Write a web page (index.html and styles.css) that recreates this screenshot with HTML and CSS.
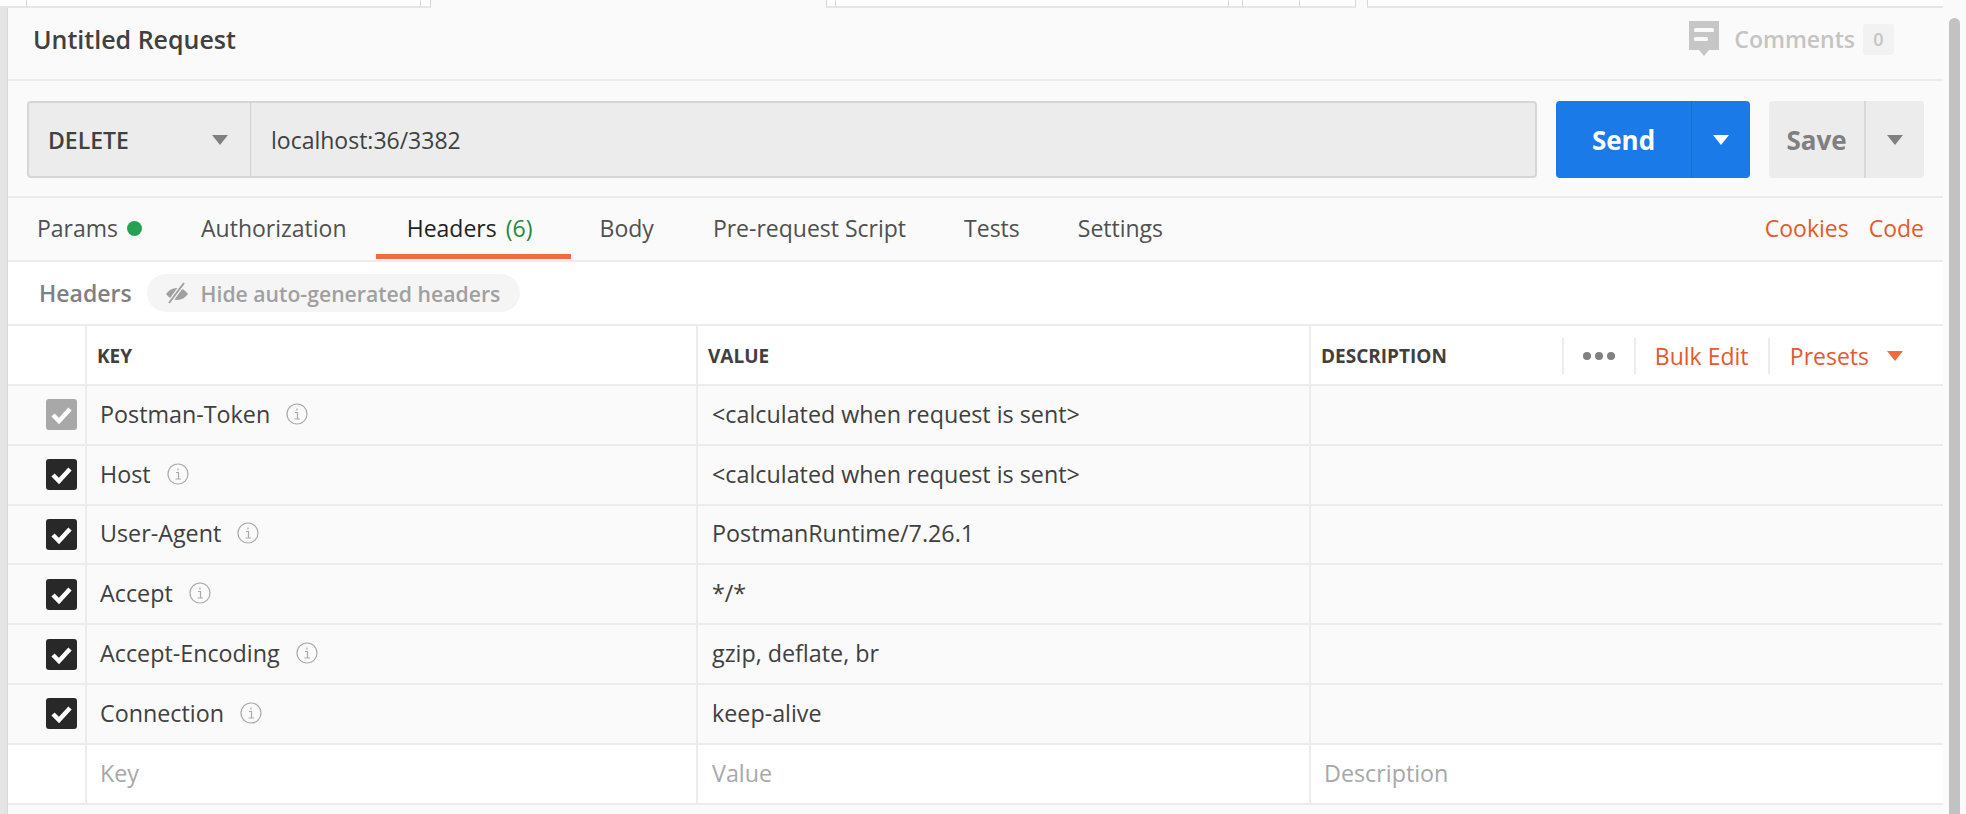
FILE: index.html
```html
<!DOCTYPE html>
<html lang="en">
<head>
  <meta charset="UTF-8">
  <title>Untitled Request</title>
  <link rel="stylesheet" href="styles.css">
</head>
<body>
  <div class="app">
    <div class="side"></div>

    <div class="main">
      <!-- tab strip cut off at the top -->
      <div class="strip">
        <div class="strip-tab t0"></div>
        <div class="strip-tab t1"></div>
        <div class="strip-tab t2"></div>
        <div class="strip-gap"></div>
        <div class="strip-tab t2b"></div>
        <div class="strip-tab t3"></div>
        <div class="strip-tab t4"></div>
        <div class="strip-tab t5"></div>
        <div class="strip-tab t6"></div>
        <div class="strip-tab t7"></div>
      </div>

      <div class="title-bar">
        <div class="title">Untitled Request</div>
        <div class="comments">
          <svg class="comment-icon" width="32" height="38" viewBox="0 0 32 38">
            <path d="M1 1h30v29H21l-5 6-5-6H1z" fill="#c6c6c6"/>
            <rect x="6" y="8" width="20" height="4" rx="1.5" fill="#fafafa"/>
            <rect x="6" y="17" width="14" height="4" rx="1.5" fill="#fafafa"/>
          </svg>
          <span class="comments-label">Comments</span>
          <span class="comments-count">0</span>
        </div>
      </div>

      <div class="url-bar">
        <div class="url-group">
          <div class="method">
            <span>DELETE</span>
            <i class="caret grey"></i>
          </div>
          <div class="url">localhost:36/3382</div>
        </div>
        <div class="send">
          <div class="send-main">Send</div>
          <div class="send-drop"><i class="caret white"></i></div>
        </div>
        <div class="save">
          <div class="save-main">Save</div>
          <div class="save-drop"><i class="caret grey"></i></div>
        </div>
      </div>

      <div class="tabs">
        <div class="tab tab-params">Params <i class="dot"></i></div>
        <div class="tab tab-auth">Authorization</div>
        <div class="tab active">Headers <span class="count">(6)</span></div>
        <div class="tab tab-body">Body</div>
        <div class="tab tab-pre">Pre-request Script</div>
        <div class="tab tab-tests">Tests</div>
        <div class="tab tab-settings">Settings</div>
        <div class="tab-links">
          <span>Cookies</span>
          <span>Code</span>
        </div>
      </div>

      <div class="sub-bar">
        <span class="sub-title">Headers</span>
        <div class="hide-pill">
          <svg width="24" height="22" viewBox="0 0 24 22">
            <path d="M1 12c2.800-3.800 6.500-6 11-6s8.200 2.200 11 6c-2.800 3.800-6.500 6-11 6s-8.200-2.200-11-6z" fill="#a0a0a0"/>
            <path d="M19 1 4 21" stroke="#f5f5f5" stroke-width="4.500"/>
            <path d="M19 1 4 21" stroke="#a0a0a0" stroke-width="2"/>
          </svg>
          <span>Hide auto-generated headers</span>
        </div>
      </div>

      <div class="table">
        <div class="row head">
          <div class="cell check"></div>
          <div class="cell key">KEY</div>
          <div class="cell value">VALUE</div>
          <div class="cell desc">
            <span class="desc-label">DESCRIPTION</span>
            <div class="desc-tools">
              <div class="tool tool-more"><i></i><i></i><i></i></div>
              <div class="tool tool-bulk">Bulk Edit</div>
              <div class="tool tool-presets">Presets <i class="caret orange"></i></div>
            </div>
          </div>
        </div>

        <div class="row">
          <div class="cell check">
            <svg class="box" width="31" height="31" viewBox="0 0 31 31"><rect width="31" height="31" rx="3" fill="#a8a8a8"/><path d="M7 16l6 6 11-12" fill="none" stroke="#fff" stroke-width="4.500"/></svg>
          </div>
          <div class="cell key">Postman-Token <svg class="info" width="22" height="22" viewBox="0 0 22 22"><circle cx="11" cy="11" r="10" fill="none" stroke="#aaa" stroke-width="1.200"/><path d="M9 9.500h2.500V16M8.500 16h5.500M11 5.500v2" fill="none" stroke="#aaa" stroke-width="1.200"/></svg></div>
          <div class="cell value">&lt;calculated when request is sent&gt;</div>
          <div class="cell desc"></div>
        </div>
        <div class="row">
          <div class="cell check">
            <svg class="box" width="31" height="31" viewBox="0 0 31 31"><rect width="31" height="31" rx="3" fill="#282828"/><path d="M7 16l6 6 11-12" fill="none" stroke="#fff" stroke-width="4.500"/></svg>
          </div>
          <div class="cell key">Host <svg class="info" width="22" height="22" viewBox="0 0 22 22"><circle cx="11" cy="11" r="10" fill="none" stroke="#aaa" stroke-width="1.200"/><path d="M9 9.500h2.500V16M8.500 16h5.500M11 5.500v2" fill="none" stroke="#aaa" stroke-width="1.200"/></svg></div>
          <div class="cell value">&lt;calculated when request is sent&gt;</div>
          <div class="cell desc"></div>
        </div>
        <div class="row">
          <div class="cell check">
            <svg class="box" width="31" height="31" viewBox="0 0 31 31"><rect width="31" height="31" rx="3" fill="#282828"/><path d="M7 16l6 6 11-12" fill="none" stroke="#fff" stroke-width="4.500"/></svg>
          </div>
          <div class="cell key">User-Agent <svg class="info" width="22" height="22" viewBox="0 0 22 22"><circle cx="11" cy="11" r="10" fill="none" stroke="#aaa" stroke-width="1.200"/><path d="M9 9.500h2.500V16M8.500 16h5.500M11 5.500v2" fill="none" stroke="#aaa" stroke-width="1.200"/></svg></div>
          <div class="cell value">PostmanRuntime/7.26.1</div>
          <div class="cell desc"></div>
        </div>
        <div class="row">
          <div class="cell check">
            <svg class="box" width="31" height="31" viewBox="0 0 31 31"><rect width="31" height="31" rx="3" fill="#282828"/><path d="M7 16l6 6 11-12" fill="none" stroke="#fff" stroke-width="4.500"/></svg>
          </div>
          <div class="cell key">Accept <svg class="info" width="22" height="22" viewBox="0 0 22 22"><circle cx="11" cy="11" r="10" fill="none" stroke="#aaa" stroke-width="1.200"/><path d="M9 9.500h2.500V16M8.500 16h5.500M11 5.500v2" fill="none" stroke="#aaa" stroke-width="1.200"/></svg></div>
          <div class="cell value">*/*</div>
          <div class="cell desc"></div>
        </div>
        <div class="row">
          <div class="cell check">
            <svg class="box" width="31" height="31" viewBox="0 0 31 31"><rect width="31" height="31" rx="3" fill="#282828"/><path d="M7 16l6 6 11-12" fill="none" stroke="#fff" stroke-width="4.500"/></svg>
          </div>
          <div class="cell key">Accept-Encoding <svg class="info" width="22" height="22" viewBox="0 0 22 22"><circle cx="11" cy="11" r="10" fill="none" stroke="#aaa" stroke-width="1.200"/><path d="M9 9.500h2.500V16M8.500 16h5.500M11 5.500v2" fill="none" stroke="#aaa" stroke-width="1.200"/></svg></div>
          <div class="cell value">gzip, deflate, br</div>
          <div class="cell desc"></div>
        </div>
        <div class="row">
          <div class="cell check">
            <svg class="box" width="31" height="31" viewBox="0 0 31 31"><rect width="31" height="31" rx="3" fill="#282828"/><path d="M7 16l6 6 11-12" fill="none" stroke="#fff" stroke-width="4.500"/></svg>
          </div>
          <div class="cell key">Connection <svg class="info" width="22" height="22" viewBox="0 0 22 22"><circle cx="11" cy="11" r="10" fill="none" stroke="#aaa" stroke-width="1.200"/><path d="M9 9.500h2.500V16M8.500 16h5.500M11 5.500v2" fill="none" stroke="#aaa" stroke-width="1.200"/></svg></div>
          <div class="cell value">keep-alive</div>
          <div class="cell desc"></div>
        </div>
        <div class="row empty">
          <div class="cell check"></div>
          <div class="cell key">Key</div>
          <div class="cell value">Value</div>
          <div class="cell desc">Description</div>
        </div>
      </div>
    </div>

    <div class="scroll"><div class="thumb"></div></div>
  </div>
</body>
</html>
```

FILE: styles.css
```css
* {
  box-sizing: border-box;
}
html, body {
  margin: 0;
  height: 814px;
  overflow: hidden;
}
body {
  font-family: "Open Sans", "Noto Sans", sans-serif;
  font-size: 23px;
  color: #333;
  background: #fafafa;
}
.app {
  display: flex;
  height: 814px;
}
.side {
  width: 8px;
  background: #e4e4e4;
  border-right: 1px solid #d8d8d8;
}
.main {
  width: 1935px;
  display: flex;
  flex-direction: column;
}
.scroll {
  flex: 1;
  background: #fafafa;
  padding: 18px 6px 0;
}
.thumb {
  height: 796px;
  background: #c2c2c2;
  border-radius: 6px 6px 0 0;
}

/* top strip */
.strip {
  display: flex;
  height: 8px;
  margin-left: -8px;
  margin-right: -23px;
}
.strip-tab {
  background: #fff;
  border-right: 1px solid #d8d8d8;
  border-bottom: 2px solid #e6e6e6;
}
.t0 { width: 27px; }
.t1 { width: 394px; }
.t2 { width: 10px; }
.strip-gap { width: 395px; }
.t2b { width: 10px; border-left: 1px solid #d8d8d8; }
.t3 { width: 393px; }
.t4 { width: 14px; }
.t5 { width: 57px; }
.t6 { width: 56px; }
.t7 { flex: 1; border-right: 0; border-left: 1px solid #d8d8d8; margin-left: 11px; }

.title-bar {
  height: 73px;
  display: flex;
  align-items: center;
  justify-content: space-between;
  padding: 0 49px 9px 25px;
  border-bottom: 2px solid #ececec;
}
.title {
  font-size: 25px;
  font-weight: 600;
  color: #404040;
}
.comments {
  display: flex;
  align-items: center;
  color: #c4c4c4;
  font-weight: 600;
}
.comment-icon {
  margin-right: 14px;
}
.comments-count {
  width: 31px;
  height: 31px;
  margin-left: 8px;
  background: #f2f2f2;
  border-radius: 3px;
  font-size: 18px;
  text-align: center;
  line-height: 31px;
}

.url-bar {
  height: 117px;
  display: flex;
  align-items: flex-start;
  padding: 20px 18px 0 19px;
  border-bottom: 2px solid #ececec;
}
.url-group {
  width: 1510px;
  height: 77px;
  display: flex;
  background: #ececec;
  border: 2px solid #d6d6d6;
  border-radius: 4px;
}
.method {
  width: 222px;
  display: flex;
  align-items: center;
  justify-content: space-between;
  padding: 0 22px 0 19px;
  border-right: 1px solid #d0d0d0;
  font-weight: 600;
  color: #404040;
}
.url {
  display: flex;
  align-items: center;
  padding-left: 20px;
  color: #404040;
}
.send {
  width: 194px;
  height: 77px;
  margin-left: 19px;
  display: flex;
  background: #1a7ae8;
  border-radius: 4px;
  color: #fff;
  font-weight: 700;
  font-size: 26px;
}
.send-main {
  width: 136px;
  display: flex;
  align-items: center;
  justify-content: center;
  border-right: 1px solid #176dd0;
}
.send-drop, .save-drop {
  flex: 1;
  display: flex;
  align-items: center;
  justify-content: center;
}
.save {
  width: 155px;
  height: 77px;
  margin-left: 19px;
  display: flex;
  background: #ececec;
  border-radius: 4px;
  color: #808080;
  font-weight: 700;
  font-size: 26px;
}
.save-main {
  width: 97px;
  display: flex;
  align-items: center;
  justify-content: center;
  border-right: 2px solid #d8d8d8;
}
.caret {
  display: block;
  width: 0;
  height: 0;
  border-left: 8px solid transparent;
  border-right: 8px solid transparent;
  border-top: 10px solid #808080;
}
.caret.white { border-top-color: #fff; }
.caret.orange { border-top-color: #f26b3a; }

.tabs {
  height: 64px;
  display: flex;
  align-items: center;
  padding: 0 19px 2px 29px;
  border-bottom: 2px solid #ececec;
  position: relative;
}
.tab {
  color: #505050;
  display: flex;
  align-items: center;
  height: 62px;
}
.tab-auth { margin-left: 59px; }
.tab.active {
  margin-left: 29px;
  width: 195px;
  justify-content: center;
  color: #222;
  border-bottom: 5px solid #f26b3a;
  padding: 5px 7px 0 0;
}
.tab-body { margin-left: 29px; }
.tab-pre { margin-left: 59px; }
.tab-tests { margin-left: 58px; }
.tab-settings { margin-left: 58px; }
.dot {
  display: block;
  width: 15px;
  height: 15px;
  margin-left: 9px;
  border-radius: 50%;
  background: #26a152;
}
.count {
  color: #26893f;
  margin-left: 9px;
}
.tab-links {
  margin-left: auto;
  display: flex;
  gap: 20px;
  color: #e5592e;
}

.sub-bar {
  height: 64px;
  display: flex;
  align-items: center;
  padding: 0 0 0 31px;
  background: #fff;
  border-bottom: 2px solid #ececec;
}
.sub-title {
  font-weight: 600;
  color: #808080;
}
.hide-pill {
  height: 38px;
  margin-left: 15px;
  padding: 0 20px 0 18px;
  display: flex;
  align-items: center;
  gap: 12px;
  border-radius: 19px;
  background: #f5f5f5;
  color: #a0a0a0;
  font-weight: 600;
  font-size: 21.2px;
}

.row {
  height: 59.8px;
  display: grid;
  grid-template-columns: 79px 611px 613px 1fr;
  background: #fafafa;
  border-bottom: 2px solid #ececec;
}
.cell {
  display: flex;
  align-items: center;
  border-right: 2px solid #ececec;
  padding: 0 0 2px 13px;
  font-size: 23.3px;
  color: #404040;
}
.value {
  padding-left: 14px;
}
.cell:last-child {
  border-right: 0;
}
.check {
  justify-content: flex-end;
  padding: 0 8px 0 0;
}
.info {
  margin-left: 16px;
}
.row.head {
  height: 60px;
  background: #fff;
}
.head .cell {
  padding: 1px 0 0 10px;
  font-size: 19px;
  font-weight: 700;
  color: #404040;
}
.desc-label {
  margin-right: auto;
}
.desc-tools {
  display: flex;
  align-items: center;
  margin-right: 40px;
  font-weight: 400;
}
.tool {
  height: 36px;
  display: flex;
  align-items: center;
  border-left: 2px solid #ececec;
  font-size: 23px;
  color: #e5592e;
}
.tool-more {
  width: 72px;
  gap: 4px;
  justify-content: center;
}
.tool-more i {
  width: 8px;
  height: 8px;
  border-radius: 50%;
  background: #808080;
}
.tool-bulk {
  width: 134px;
  padding-left: 19px;
}
.tool-presets {
  padding-left: 20px;
}
.tool-presets .caret {
  margin-left: 18px;
}
.row.empty {
  background: #fff;
}
.empty .cell {
  color: #a8a8a8;
}
```
